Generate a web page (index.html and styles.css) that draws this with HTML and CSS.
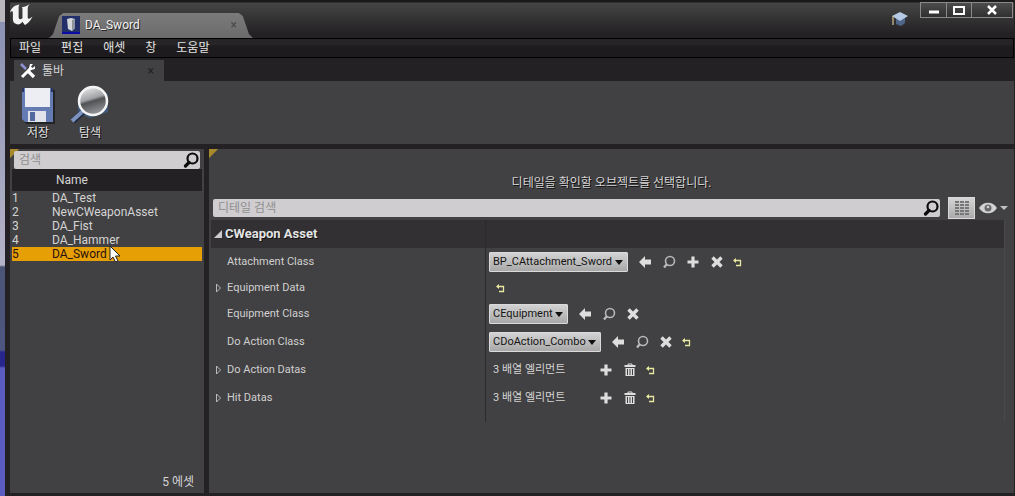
FILE: index.html
```
<!DOCTYPE html>
<html lang="ko">
<head>
    <meta charset="UTF-8">
    <meta name="viewport" content="width=device-width, initial-scale=1.0">
    <title>DA_Sword</title>
    <link rel="stylesheet" href="styles.css">
</head>
<body>
    <!-- shared icons -->
    <svg class="icon-defs" aria-hidden="true">
        <symbol id="icon-search" viewBox="0 0 16 16">
            <circle cx="9.5" cy="6.5" r="5" fill="none" stroke="currentColor" stroke-width="2.2"/>
            <path d="M6 10.5L2.500 14" stroke="currentColor" stroke-width="3.2" stroke-linecap="round"/>
        </symbol>
        <symbol id="icon-use" viewBox="0 0 14 14">
            <path d="M1 7L7 1V4.500H13V9.500H7V13Z" fill="currentColor"/>
        </symbol>
        <symbol id="icon-browse" viewBox="0 0 14 14">
            <circle cx="8" cy="6" r="4.5" fill="none" stroke="currentColor" stroke-width="1.6"/>
            <path d="M5 9L2 12.5" stroke="currentColor" stroke-width="2.400"/>
        </symbol>
        <symbol id="icon-add" viewBox="0 0 14 14">
            <path d="M7 1.5V12.5M1.5 7H12.5" stroke="currentColor" stroke-width="3.2"/>
        </symbol>
        <symbol id="icon-clear" viewBox="0 0 14 14">
            <path d="M2.500 2.5L11.5 11.5M11.5 2.5L2.5 11.5" stroke="currentColor" stroke-width="3.4"/>
        </symbol>
        <symbol id="icon-trash" viewBox="0 0 14 14">
            <path d="M5 2V1H9V2" fill="none" stroke="currentColor"/>
            <path d="M1.5 2H12.5V4H1.5ZM2.500 5H11.5V13H2.5Z" fill="currentColor"/>
            <path d="M4.500 6V12M7 6V12M9.500 6V12" stroke="#414042"/>
        </symbol>
        <symbol id="icon-reset" viewBox="0 0 14 14">
            <path d="M4 5.5H10.5V10.5H6" fill="none" stroke="#e8e8a0" stroke-width="1.3"/>
            <path d="M6 3V8L3 5.5Z" fill="#e8e8a0"/>
        </symbol>
    </svg>

    <div class="desktop">
        <div class="window">
            <header class="titlebar">
                <svg class="logo" viewBox="0 0 24 22" role="img" aria-label="Unreal">
                    <path d="M0 9C1 4.500 4 1.500 10 0.500C9 1.500 9 3 9 4V14C9 16 10.500 16.500 13 15V5C13 4 12.500 3.500 11.500 3.500C14.500 3 17.500 2.500 20.500 0C19 2 18.500 3 18.500 5V14C18.500 16 20 16 23.500 13C21 18.500 18.500 20 15.500 22L13 18.500C11 21 9 22 6.500 21C4 20 3 18.500 3 16V9C3 7 1.500 7.500 0 9Z" fill="#f4f4f4"/>
                </svg>
                <div class="doc-tab">
                    <svg class="doc-icon" viewBox="0 0 18 18">
                        <rect width="18" height="18" fill="#222f68"/>
                        <rect y="16" width="18" height="2" fill="#0b0ba8"/>
                        <path d="M5 3L9 2L13 3V12L10 15L6 13Z" fill="#d4d8dc"/>
                        <path d="M10 4L13 3V12L10 15Z" fill="#8e949c"/>
                    </svg>
                    <span>DA_Sword</span>
                    <button class="tab-close" aria-label="닫기">×</button>
                </div>
                <div class="title-right">
                    <svg class="tutorial" viewBox="0 0 18 16">
                        <path d="M5 8V13L10 15L14 12V7Z" fill="#4f6688"/>
                        <path d="M1 5L9 1L17 5L9 10Z" fill="#b6cae6"/>
                        <path d="M2 5V14" stroke="#d8c49a" stroke-width="1.2"/>
                    </svg>
                    <div class="window-buttons">
                        <button aria-label="최소화"><svg viewBox="0 0 12 12"><path d="M1 8H11" stroke="#fff" stroke-width="3"/></svg></button>
                        <button aria-label="최대화"><svg viewBox="0 0 12 12"><path d="M1 3H11V10H1Z" fill="none" stroke="#fff" stroke-width="2"/></svg></button>
                        <button class="close" aria-label="창 닫기"><svg viewBox="0 0 12 12"><path d="M2 2L10 10M10 2L2 10" stroke="#fff" stroke-width="2.5"/></svg></button>
                    </div>
                </div>
            </header>

            <nav class="menubar">
                <button>파일</button>
                <button>편집</button>
                <button>애셋</button>
                <button>창</button>
                <button>도움말</button>
            </nav>

            <div class="tab-row">
                <div class="toolbar-tab">
                    <svg class="tools-icon" viewBox="0 0 16 16">
                        <path d="M1 1L6 6" stroke="#8e93d8" stroke-width="2.5"/>
                        <path d="M8 8L14 14" stroke="#fff" stroke-width="3.2"/>
                        <path d="M2 14L11 5" stroke="#fff" stroke-width="3"/>
                        <path d="M10 1L9 5L11 7L15 6L15 3L12.5 5L11 3.5L13 1Z" fill="#fff"/>
                    </svg>
                    <span>툴바</span>
                    <button class="tab-close" aria-label="닫기">×</button>
                </div>
            </div>

            <div class="toolbar">
                <button class="tool">
                    <svg viewBox="0 0 40 40">
                        <path d="M6 5H37V39H8L6 36Z" fill="#222426"/>
                        <path d="M4 3H35V37H7L4 34Z" fill="#647bb4"/>
                        <path d="M7 3H32V22H7Z" fill="#edeef4"/>
                        <path d="M4 3H6V7H4ZM33 3H35V7H33Z" fill="#26365f"/>
                        <path d="M10 26H28V37H10Z" fill="#dfe2ea"/>
                        <path d="M12 27H17V36H12Z" fill="#5269a0"/>
                    </svg>
                    <span>저장</span>
                </button>
                <button class="tool">
                    <svg viewBox="0 0 40 40">
                        <defs>
                            <linearGradient id="lens" x1="0" y1="0" x2="0.3" y2="1">
                                <stop offset="0" stop-color="#f6f6f6"/>
                                <stop offset="0.5" stop-color="#a0a2a5"/>
                                <stop offset="0.6" stop-color="#505254"/>
                                <stop offset="1" stop-color="#8d8f92"/>
                            </linearGradient>
                        </defs>
                        <path d="M8 11L30 5L38 9V27L20 33L8 28Z" fill="#3e587c"/>
                        <path d="M15 25L3 36" stroke="#1d2942" stroke-width="6"/>
                        <path d="M13 26L2 36" stroke="#7d93bd" stroke-width="4"/>
                        <circle cx="23" cy="16" r="14" fill="url(#lens)" stroke="#f4f4f4" stroke-width="2.5"/>
                    </svg>
                    <span>탐색</span>
                </button>
            </div>

            <main class="panels">
                <section class="asset-panel">
                    <div class="search-box">
                        <input type="text" placeholder="검색" aria-label="검색">
                        <svg><use href="#icon-search"/></svg>
                    </div>
                    <table class="asset-table">
                        <thead>
                            <tr><th class="index"></th><th>Name</th></tr>
                        </thead>
                        <tbody>
                            <tr><td>1</td><td>DA_Test</td></tr>
                            <tr><td>2</td><td>NewCWeaponAsset</td></tr>
                            <tr><td>3</td><td>DA_Fist</td></tr>
                            <tr><td>4</td><td>DA_Hammer</td></tr>
                            <tr class="selected"><td>5</td><td>DA_Sword</td></tr>
                        </tbody>
                    </table>
                    <div class="asset-count">5 에셋</div>
                </section>

                <section class="details-panel">
                    <p class="hint">디테일을 확인할 오브젝트를 선택합니다.</p>
                    <div class="details-search">
                        <div class="search-box">
                            <input type="text" placeholder="디테일 검색" aria-label="디테일 검색">
                            <svg><use href="#icon-search"/></svg>
                        </div>
                        <button class="matrix" aria-label="프로퍼티 매트릭스">
                            <svg viewBox="0 0 14 14"><path d="M0 1H14M0 4H14M0 7H14M0 10H14M0 13H14" stroke="#77777a" stroke-width="2" stroke-dasharray="4 1"/></svg>
                        </button>
                        <button class="view-options" aria-label="보기 옵션">
                            <svg viewBox="0 0 30 14">
                                <path d="M0 7C4 0 14 0 18 7C14 14 4 14 0 7Z" fill="#d2d2d4"/>
                                <circle cx="9" cy="7" r="3.5" fill="#6a6a6d"/>
                                <circle cx="9" cy="6" r="1.3" fill="#d2d2d4"/>
                                <path d="M21 5H29L25 9Z" fill="#c0c0c2"/>
                            </svg>
                        </button>
                    </div>

                    <div class="properties">
                        <div class="category">
                            <h2><button class="arrow open" aria-label="접기"><svg viewBox="0 0 8 8"><path d="M8 0V8H0Z" fill="#ccc"/></svg></button>CWeapon Asset</h2>
                            <div class="value"></div>
                        </div>
                        <div class="property">
                            <label class="name" for="attachment">Attachment Class</label>
                            <div class="value">
                                <span class="picker"><select id="attachment"><option>BP_CAttachment_Sword</option></select></span>
                                <button aria-label="사용"><svg><use href="#icon-use"/></svg></button>
                                <button class="browse" aria-label="찾기"><svg><use href="#icon-browse"/></svg></button>
                                <button aria-label="추가"><svg><use href="#icon-add"/></svg></button>
                                <button aria-label="지우기"><svg><use href="#icon-clear"/></svg></button>
                                <button class="reset" aria-label="초기화"><svg><use href="#icon-reset"/></svg></button>
                            </div>
                        </div>
                        <div class="property short">
                            <div class="name"><button class="arrow" aria-label="펼치기"><svg viewBox="0 0 8 10"><path d="M1.5 1V9L5.5 5Z" fill="none" stroke="#bbb"/></svg></button>Equipment Data</div>
                            <div class="value">
                                <button class="reset" aria-label="초기화"><svg><use href="#icon-reset"/></svg></button>
                            </div>
                        </div>
                        <div class="property">
                            <label class="name" for="equipment">Equipment Class</label>
                            <div class="value">
                                <span class="picker"><select id="equipment"><option>CEquipment</option></select></span>
                                <button aria-label="사용"><svg><use href="#icon-use"/></svg></button>
                                <button class="browse" aria-label="찾기"><svg><use href="#icon-browse"/></svg></button>
                                <button aria-label="지우기"><svg><use href="#icon-clear"/></svg></button>
                            </div>
                        </div>
                        <div class="property">
                            <label class="name" for="doaction">Do Action Class</label>
                            <div class="value">
                                <span class="picker"><select id="doaction"><option>CDoAction_Combo</option></select></span>
                                <button aria-label="사용"><svg><use href="#icon-use"/></svg></button>
                                <button class="browse" aria-label="찾기"><svg><use href="#icon-browse"/></svg></button>
                                <button aria-label="지우기"><svg><use href="#icon-clear"/></svg></button>
                                <button class="reset" aria-label="초기화"><svg><use href="#icon-reset"/></svg></button>
                            </div>
                        </div>
                        <div class="property">
                            <div class="name"><button class="arrow" aria-label="펼치기"><svg viewBox="0 0 8 10"><path d="M1.5 1V9L5.5 5Z" fill="none" stroke="#bbb"/></svg></button>Do Action Datas</div>
                            <div class="value">
                                <span class="count">3 배열 엘리먼트</span>
                                <button aria-label="추가"><svg><use href="#icon-add"/></svg></button>
                                <button aria-label="비우기"><svg><use href="#icon-trash"/></svg></button>
                                <button class="reset" aria-label="초기화"><svg><use href="#icon-reset"/></svg></button>
                            </div>
                        </div>
                        <div class="property">
                            <div class="name"><button class="arrow" aria-label="펼치기"><svg viewBox="0 0 8 10"><path d="M1.5 1V9L5.5 5Z" fill="none" stroke="#bbb"/></svg></button>Hit Datas</div>
                            <div class="value">
                                <span class="count">3 배열 엘리먼트</span>
                                <button aria-label="추가"><svg><use href="#icon-add"/></svg></button>
                                <button aria-label="비우기"><svg><use href="#icon-trash"/></svg></button>
                                <button class="reset" aria-label="초기화"><svg><use href="#icon-reset"/></svg></button>
                            </div>
                        </div>
                        <div class="property tail"><div class="name"></div><div class="value"></div></div>
                    </div>
                </section>
            </main>
        </div>

        <svg class="cursor" viewBox="0 0 12 18">
            <path d="M1 1V15L4 12L6.5 17L9 16L6.5 11H11Z" fill="#fff" stroke="#222"/>
        </svg>
    </div>
</body>
</html>
```
FILE: styles.css
```
* {
    box-sizing: border-box;
}
body {
    margin: 0;
    font-family: Roboto, "Noto Sans CJK KR", sans-serif;
    font-size: 12px;
    line-height: 14px;
    color: #d4d4d4;
}
button, input, select {
    font: inherit;
    color: inherit;
}
button {
    background: none;
    border: 0;
    padding: 0;
}
svg {
    display: block;
    flex: none;
}
.icon-defs {
    position: absolute;
    width: 0;
    height: 0;
}
.desktop {
    position: relative;
    min-height: 100vh;
    padding-left: 5px;
    display: flex;
    background: linear-gradient(#b8b8bc 22px, #8c92b4 22px, #b4b4c8 265px, #4a5576 267px, #4d5680 350px, #26268c 352px, #26268c 366px, #5a5cc0 368px);
}
.window {
    flex: 1;
    display: flex;
    flex-direction: column;
    min-width: 0;
    padding: 0 1px 3px 5px;
    background: #232123;
}

/* title bar */
.titlebar {
    display: flex;
    height: 38px;
    background: linear-gradient(#1a1a1a 2px, #454545 3px, #232123 34px);
}
.logo {
    width: 23px;
    height: 21px;
    margin-top: 4px;
}
.doc-tab {
    display: flex;
    align-items: center;
    width: 204px;
    height: 25px;
    margin: 13px 0 0 16px;
    padding: 0 16px 2px 13px;
    color: #f0f0f0;
    text-shadow: 1px 1px 0 #222;
    background: linear-gradient(#7c7b7b, #6c6b6c);
    clip-path: polygon(0 100%, 2% 84%, 5% 12%, 7% 0, 93% 0, 95% 12%, 98% 84%, 100% 100%);
}
.doc-icon {
    width: 18px;
    height: 18px;
    margin-right: 5px;
}
.tab-close {
    margin-left: auto;
    color: #48484a;
    text-shadow: none;
}
.title-right {
    display: flex;
    align-items: flex-start;
    gap: 11px;
    margin-left: auto;
}
.tutorial {
    width: 18px;
    height: 16px;
    margin-top: 11px;
}
.window-buttons {
    display: flex;
    height: 16px;
    margin: 2px 1px 0 0;
    border: 1px solid #8a8a8a;
}
.window-buttons button {
    display: flex;
    align-items: center;
    justify-content: center;
    width: 25px;
    background: linear-gradient(#4c4c4c, #303030);
}
.window-buttons button + button {
    border-left: 1px solid #8a8a8a;
}
.window-buttons .close {
    width: 41px;
}
.window-buttons svg {
    width: 12px;
    height: 12px;
}

/* menu */
.menubar {
    display: flex;
    gap: 20px;
    height: 20px;
    padding-left: 8px;
    border: 1px solid #000;
    background: linear-gradient(#262426 6px, #1d1b1d 7px);
    color: #e4e4e4;
}

/* toolbar */
.tab-row {
    height: 23px;
    padding-top: 2px;
}
.toolbar-tab {
    display: flex;
    align-items: center;
    gap: 6px;
    width: 150px;
    height: 21px;
    margin-left: 4px;
    padding: 0 10px 0 6px;
    background: #414042;
}
.toolbar-tab .tab-close {
    color: #232123;
}
.tools-icon {
    width: 16px;
    height: 16px;
}
.toolbar {
    display: flex;
    gap: 12px;
    height: 63px;
    padding: 4px 8px;
    background: #414042;
}
.tool {
    display: flex;
    flex-direction: column;
    align-items: center;
    gap: 1px;
    width: 40px;
    color: #e0e0e0;
    text-shadow: 1px 1px 0 #111;
}
.tool svg {
    width: 40px;
    height: 40px;
}

/* panels */
.panels {
    flex: 1;
    display: flex;
    gap: 5px;
    margin-top: 5px;
}
.asset-panel, .details-panel {
    background: linear-gradient(135deg, #a88a2c 6px, #414042 7px);
}
.asset-panel {
    display: flex;
    flex-direction: column;
    width: 194px;
    padding: 2px 2px 0;
}
.search-box {
    display: flex;
    align-items: center;
    flex: 1;
    height: 18px;
    padding: 0 1px 0 5px;
    border-radius: 2px;
    background: #cfcdcf;
    color: #0c0c0c;
}
.search-box input {
    flex: 1;
    min-width: 0;
    padding: 0;
    border: 0;
    outline: 0;
    background: none;
}
.search-box input::placeholder {
    color: #8f8f8f;
}
.search-box svg {
    width: 16px;
    height: 16px;
}
.asset-panel .search-box {
    flex: none;
    margin: 0 2px;
}
.asset-table {
    width: 100%;
    border-collapse: collapse;
}
.asset-table th {
    height: 22px;
    padding: 0 0 0 4px;
    text-align: left;
    font-weight: 400;
    background: #232123;
}
.asset-table .index {
    width: 40px;
}
.asset-table td {
    height: 14px;
    padding: 0;
}
.asset-table .selected {
    background: #e69f05;
    color: #2a1010;
}
.asset-count {
    margin-top: auto;
    padding: 0 8px 4px 0;
    text-align: right;
}
.details-panel {
    flex: 1;
    min-width: 0;
}
.hint {
    margin: 0;
    padding: 27px 0 7px;
    text-align: center;
    text-shadow: 1px 1px 0 #111;
}
.details-search {
    display: flex;
    align-items: center;
    gap: 8px;
    height: 22px;
    padding: 0 5px 0 4px;
}
.matrix {
    display: flex;
    align-items: center;
    justify-content: center;
    width: 27px;
    height: 22px;
    border: 1px solid #d8d8d8;
    background: linear-gradient(#d4d4d4, #aaa);
}
.matrix svg {
    width: 14px;
    height: 14px;
}
.view-options svg {
    width: 30px;
    height: 14px;
}
.details-search .view-options {
    margin-left: -4px;
}

/* property rows */
.properties {
    margin: 1px 9px 0 2px;
    border-right: 1px solid #4a494b;
    font-size: 11px;
}
.category, .property {
    display: grid;
    grid-template-columns: 274px 1fr;
    height: 28px;
}
.category {
    background: #323032;
}
.category h2 {
    display: flex;
    align-items: center;
    margin: 0;
    padding-left: 3px;
    font-size: 13px;
    font-weight: 700;
    color: #e4e4e4;
    text-shadow: 1px 1px 0 #111;
}
.property.short {
    height: 24px;
}
.property.tail {
    height: 10px;
}
.name {
    display: flex;
    align-items: center;
    padding-left: 16px;
    color: #d0d0d0;
}
.name .arrow {
    width: 8px;
    margin-left: -12px;
    margin-right: 4px;
}
.arrow.open {
    width: 8px;
    margin-right: 3px;
}
.arrow svg {
    width: 8px;
}
.value {
    display: flex;
    align-items: center;
    gap: 10px;
    padding-left: 3px;
    border-left: 1px solid #2b292b;
}
.value button svg {
    width: 14px;
    height: 14px;
    color: #dedede;
}
.value .browse svg {
    color: #b8b8b8;
}
.value .reset {
    margin-left: -4px;
}
.short .value .reset {
    margin-left: 4px;
}
.picker {
    position: relative;
}
.picker::after {
    content: "";
    position: absolute;
    right: 5px;
    top: 8px;
    border: 4px solid transparent;
    border-top: 5px solid #111;
    border-bottom: 0;
    pointer-events: none;
}
.picker select {
    display: block;
    appearance: none;
    height: 20px;
    padding: 0 14px 0 3px;
    border: 1px solid #dadada;
    border-radius: 1px;
    background: linear-gradient(#d2d2d2, #a8a8a8);
    color: #141414;
}
.count {
    width: 100px;
    padding-left: 4px;
}

.cursor {
    position: absolute;
    left: 109px;
    top: 245px;
    width: 12px;
    height: 18px;
}
```
